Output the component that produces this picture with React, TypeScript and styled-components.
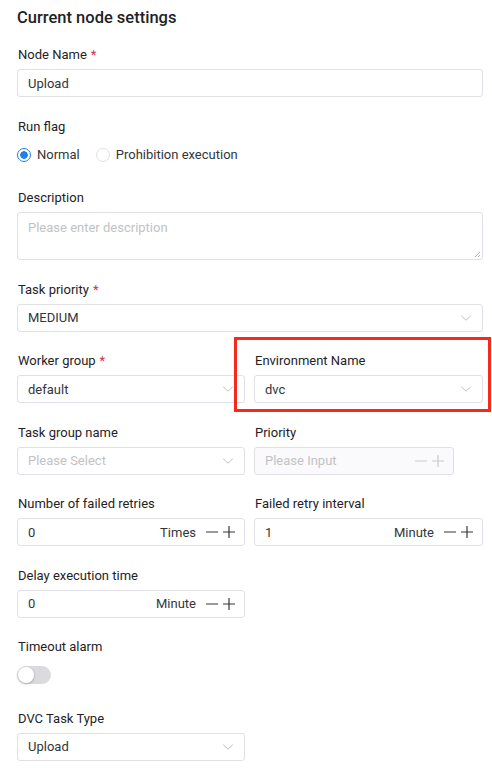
import React from "react";
import { createGlobalStyle, styled } from "styled-components";

const GlobalStyle = createGlobalStyle`
  html, body {
    margin: 0;
    background: #fff;
  }
  body {
    font-family: Roboto, "Noto Sans", sans-serif;
    color: #333639;
  }
  * {
    box-sizing: border-box;
  }
`;

function Chevron() {
  return (
    <svg width="12" height="12" viewBox="0 0 12 12" fill="none">
      <path d="M1.5 4L6 8.2 10.5 4" stroke="#c2c2c6" strokeWidth="1" strokeLinecap="round" strokeLinejoin="round" />
    </svg>
  );
}

function Minus({ color }: { color: string }) {
  return (
    <svg width="12" height="12" viewBox="0 0 12 12">
      <path d="M0.5 6h11" stroke={color} strokeWidth="1.2" strokeLinecap="round" />
    </svg>
  );
}

function Plus({ color }: { color: string }) {
  return (
    <svg width="12" height="12" viewBox="0 0 12 12">
      <path d="M0.5 6h11M6 0.5v11" stroke={color} strokeWidth="1.2" strokeLinecap="round" />
    </svg>
  );
}

function Select({ value, placeholder }: { value?: string; placeholder?: string }) {
  return (
    <Box>
      <Value $muted={!value}>{value || placeholder}</Value>
      <Chevron />
    </Box>
  );
}

function NumberInput({
  value,
  unit,
  placeholder,
  disabled,
  width,
}: {
  value?: string;
  unit?: string;
  placeholder?: string;
  disabled?: boolean;
  width?: number;
}) {
  const iconColor = disabled ? "#c9c9cc" : "#333639";
  return (
    <Box $disabled={disabled} $stepper style={width ? { width } : undefined}>
      <Value $muted={!value}>{value || placeholder}</Value>
      {unit && <Unit>{unit}</Unit>}
      <Steppers>
        <Minus color={iconColor} />
        <Plus color={iconColor} />
      </Steppers>
    </Box>
  );
}

function Item({
  label,
  required,
  highlight,
  children,
}: {
  label: string;
  required?: boolean;
  highlight?: boolean;
  children: React.ReactNode;
}) {
  return (
    <FormItem $highlight={highlight}>
      <Label>
        {label}
        {required && <Star>*</Star>}
      </Label>
      {children}
    </FormItem>
  );
}

export default function App() {
  return (
    <Page>
      <GlobalStyle />
      <Title>Current node settings</Title>

      <Item label="Node Name" required>
        <Box>
          <Value>Upload</Value>
        </Box>
      </Item>

      <Item label="Run flag">
        <RadioGroup>
          <RadioOption>
            <RadioDot $checked />
            Normal
          </RadioOption>
          <RadioOption>
            <RadioDot />
            Prohibition execution
          </RadioOption>
        </RadioGroup>
      </Item>

      <Item label="Description">
        <TextArea>
          <Value $muted>Please enter description</Value>
          <Grip viewBox="0 0 8 8">
            <path d="M7 2L2 7M7 5L5 7" stroke="#9a9a9a" strokeWidth="0.8" />
          </Grip>
        </TextArea>
      </Item>

      <Item label="Task priority" required>
        <Select value="MEDIUM" />
      </Item>

      <Row>
        <Item label="Worker group" required>
          <Select value="default" />
        </Item>
        <Item label="Environment Name" highlight>
          <Select value="dvc" />
        </Item>
      </Row>

      <Row>
        <Item label="Task group name">
          <Select placeholder="Please Select" />
        </Item>
        <Item label="Priority">
          <NumberInput placeholder="Please Input" disabled width={200} />
        </Item>
      </Row>

      <Row>
        <Item label="Number of failed retries">
          <NumberInput value="0" unit="Times" />
        </Item>
        <Item label="Failed retry interval">
          <NumberInput value="1" unit="Minute" />
        </Item>
      </Row>

      <Row>
        <Item label="Delay execution time">
          <NumberInput value="0" unit="Minute" />
        </Item>
        <div />
      </Row>

      <Item label="Timeout alarm">
        <SwitchRow>
          <Switch />
        </SwitchRow>
      </Item>

      <Row>
        <Item label="DVC Task Type">
          <Select value="Upload" />
        </Item>
        <div />
      </Row>
    </Page>
  );
}

const Page = styled.div`
  padding: 6px 9px 0 17px;
  font-size: 13px;
`;

const Title = styled.h3`
  margin: 0 0 15px;
  font-size: 16.5px;
  line-height: 24px;
  font-weight: 500;
  color: #1f2225;
`;

const Row = styled.div`
  display: grid;
  grid-template-columns: 228px 1fr;
  column-gap: 9px;
`;

const FormItem = styled.div<{ $highlight?: boolean }>`
  position: relative;
  display: flex;
  flex-direction: column;
  margin-bottom: 19.5px;

  ${(p) =>
    p.$highlight &&
    `
    &::after {
      content: "";
      position: absolute;
      top: -14px;
      left: -20px;
      right: -8px;
      bottom: -9px;
      border: 3px solid #f52a1c;
      pointer-events: none;
    }
  `}
`;

const Label = styled.label`
  display: block;
  line-height: 20px;
  padding: 0 0 4px 1px;
  color: #1f2225;
`;

const Star = styled.span`
  color: #d03050;
  margin-left: 4px;
`;

const Box = styled.div<{ $disabled?: boolean; $stepper?: boolean }>`
  display: flex;
  align-items: center;
  height: 28px;
  padding: 0 ${(p) => (p.$stepper ? "9px" : "10px")} 0 10px;
  border: 1px solid #e0e0e6;
  border-radius: 3px;
  background: ${(p) => (p.$disabled ? "#fafafc" : "#fff")};
`;

const Value = styled.span<{ $muted?: boolean }>`
  flex: 1;
  color: ${(p) => (p.$muted ? "#c2c2c6" : "#333639")};
  white-space: nowrap;
  overflow: hidden;
`;

const Unit = styled.span`
  color: #333639;
  margin-right: 10px;
`;

const Steppers = styled.span`
  display: flex;
  gap: 5px;
  align-items: center;
`;

const TextArea = styled.div`
  position: relative;
  height: 48px;
  padding: 5px 10px;
  border: 1px solid #e0e0e6;
  border-radius: 3px;
  line-height: 20px;
`;

const Grip = styled.svg`
  position: absolute;
  right: 1px;
  bottom: 1px;
  width: 8px;
  height: 8px;
`;

const RadioGroup = styled.div`
  display: flex;
  align-items: center;
  height: 28px;
  gap: 16px;
`;

const RadioOption = styled.span`
  display: flex;
  align-items: center;
  gap: 6px;
  color: #333639;
`;

const RadioDot = styled.span<{ $checked?: boolean }>`
  width: 14px;
  height: 14px;
  border-radius: 50%;
  border: 1px solid ${(p) => (p.$checked ? "#2080f0" : "#e0e0e6")};
  background: ${(p) => (p.$checked ? "radial-gradient(circle, #2080f0 0 3.5px, #fff 4px)" : "#fff")};
`;

const SwitchRow = styled.div`
  display: flex;
  align-items: center;
  height: 28px;
`;

const Switch = styled.span`
  position: relative;
  width: 34px;
  height: 18px;
  border-radius: 9px;
  background: #dbdbdf;

  &::before {
    content: "";
    position: absolute;
    top: 1px;
    left: 1px;
    width: 16px;
    height: 16px;
    border-radius: 50%;
    background: #fff;
    box-shadow: 0 1px 3px rgba(0, 0, 0, 0.25);
  }
`;
